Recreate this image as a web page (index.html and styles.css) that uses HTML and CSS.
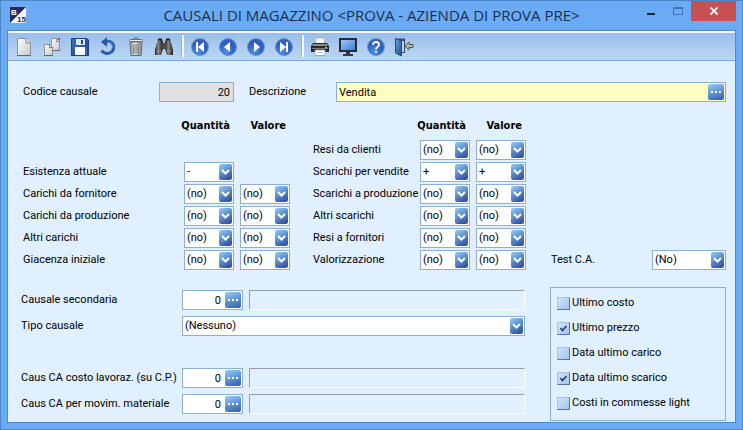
FILE: index.html
```html
<!DOCTYPE html>
<html lang="it">
<head>
<meta charset="utf-8">
<title>Causali di magazzino</title>
<link rel="stylesheet" href="styles.css">
</head>
<body>
<div class="window">
  <header class="titlebar">
    <svg class="app-icon" viewBox="0 0 16 16" aria-hidden="true">
      <rect width="16" height="16" rx="1" fill="#f4f5fa"/>
      <path d="M0 0H16L0 16Z" fill="#2b2a5c"/>
      <text x="1" y="8" class="app-letter">B</text>
      <text x="7" y="15" class="app-number">15</text>
    </svg>
    <h1 class="title">CAUSALI DI MAGAZZINO &lt;PROVA - AZIENDA DI PROVA PRE&gt;</h1>
    <div class="window-buttons">
      <button class="win-btn" type="button" aria-label="Riduci a icona"><svg width="10" height="10" viewBox="0 0 10 10"><rect x="1" y="7" width="8" height="2" fill="#16263c"/></svg></button>
      <button class="win-btn" type="button" aria-label="Ingrandisci"><svg width="10" height="8" viewBox="0 0 10 8"><path d="M.5.5H9.500V7.500H.5ZM.5 1.500H9.500" fill="none" stroke="#4673ad"/></svg></button>
      <button class="win-btn close" type="button" aria-label="Chiudi"><svg width="8" height="8" viewBox="0 0 8 8"><path d="M.5.5L7.500 7.500M7.500.5L.5 7.500" stroke="#fff" stroke-width="1.800"/></svg></button>
    </div>
  </header>

  <main class="client">
    <svg class="defs" aria-hidden="true">
      <defs>
        <linearGradient id="page" x1="0" y1="0" x2="1" y2="1"><stop offset="0" stop-color="#fff"/><stop offset="1" stop-color="#c4c6ca"/></linearGradient>
        <radialGradient id="ball" cx=".4" cy=".75" r=".75"><stop offset="0" stop-color="#4f92ea"/><stop offset=".6" stop-color="#2c5fc0"/><stop offset="1" stop-color="#3b62b4"/></radialGradient>
        <linearGradient id="screen" x1="0" y1="0" x2="1" y2="1"><stop offset="0" stop-color="#9cc8fb"/><stop offset="1" stop-color="#3d80dd"/></linearGradient>
        <linearGradient id="disk" x1="0" y1="0" x2="1" y2="1"><stop offset="0" stop-color="#3c6fb6"/><stop offset="1" stop-color="#1d4288"/></linearGradient>
        <linearGradient id="metal" x1="0" y1="0" x2="1" y2="0"><stop offset="0" stop-color="#8d9095"/><stop offset=".4" stop-color="#eceef0"/><stop offset="1" stop-color="#85888d"/></linearGradient>
        <linearGradient id="lens" x1="0" y1="0" x2="1" y2="0"><stop offset="0" stop-color="#1c1c1e"/><stop offset=".4" stop-color="#8a8782"/><stop offset="1" stop-color="#18181a"/></linearGradient>
        <linearGradient id="door" x1="0" y1="0" x2="1" y2="1"><stop offset="0" stop-color="#6f9fdc"/><stop offset="1" stop-color="#244a92"/></linearGradient>
      </defs>
    </svg>

    <nav class="toolbar" aria-label="Comandi">
      <button type="button" aria-label="Nuovo"><svg viewBox="0 0 20 20"><path d="M3.500 1.500H12L16.500 6V18.500H3.500Z" fill="url(#page)" stroke="#8f9399"/><path d="M12 1.500V6H16.500" fill="#e3e4e7" stroke="#85898f"/><path d="M3 18.500H17" stroke="#63676c"/></svg></button>
      <button type="button" aria-label="Duplica"><svg viewBox="0 0 20 20"><path d="M9.500 1.500H15L17.500 4V13.500H9.500Z" fill="url(#page)" stroke="#8f9399"/><path d="M14.500 1.500V4.500H17.500" fill="none" stroke="#85898f"/><path d="M2.500 7.500H8L10.500 10V18.500H2.500Z" fill="url(#page)" stroke="#8f9399"/><path d="M7.500 7.500V10.500H10.500" fill="none" stroke="#777b80"/><path d="M2 18.500H11M10.500 13.500H18" stroke="#63676c"/><rect x="16" y="1" width="2" height="2" fill="#d8435a"/></svg></button>
      <button type="button" aria-label="Salva"><svg viewBox="0 0 20 20"><path d="M1.500 1.500H17L18.500 3V18.500H1.500Z" fill="url(#disk)" stroke="#1c4389"/><rect x="6" y="2" width="9" height="6" fill="#dce6f2"/><rect x="11" y="3" width="2" height="4" fill="#26487f"/><rect x="5" y="10" width="10" height="8" fill="#fff"/><rect x="15" y="10" width="2" height="8" fill="#2e64b4"/></svg></button>
      <button type="button" aria-label="Annulla"><svg viewBox="0 0 20 20"><path d="M8 4.500C13 3.500 16.500 7 15.500 11.500C14.500 16.500 7.500 18.500 3.500 13.500" fill="none" stroke="#2f5fa9" stroke-width="3"/><path d="M9 0V10L3 5Z" fill="#2a579f"/><path d="M10 5C13 5 15 8 14.500 11" fill="none" stroke="#6392d2"/></svg></button>
      <button type="button" aria-label="Elimina"><svg viewBox="0 0 20 20"><path d="M4 5H16L15 18.500H5Z" fill="url(#metal)" stroke="#65696e"/><path d="M7 7L7.500 17M9 7V17M11 7V17M13 7L12.500 17" stroke="#777b80"/><rect x="3.500" y="2.500" width="13" height="2" rx="1" fill="#e6e8ea" stroke="#6d7176"/><path d="M8 2V1H12V2" fill="none" stroke="#6d7176"/></svg></button>
      <button type="button" aria-label="Cerca"><svg viewBox="0 0 20 20"><path d="M4 2H8L9 5V12L7 18H1V13Z" fill="url(#lens)"/><path d="M12 2H16L19 13V18H13L11 12V5Z" fill="url(#lens)"/><rect x="8" y="6" width="4" height="6" fill="#4b4a49"/><path d="M4 2.500H8M12 2.500H16" stroke="#242426" stroke-width="2"/><path d="M2.500 14H7M13 14H17" stroke="#a5a19a"/></svg></button>
      <span class="separator"></span>
      <button type="button" aria-label="Primo"><svg viewBox="0 0 20 20"><circle cx="10" cy="10" r="8.500" fill="url(#ball)" stroke="#7590cb"/><path d="M6 5H8V15H6ZM14 5V15L8 10Z" fill="#fff"/></svg></button>
      <button type="button" aria-label="Precedente"><svg viewBox="0 0 20 20"><circle cx="10" cy="10" r="8.500" fill="url(#ball)" stroke="#7590cb"/><path d="M12 5V15L6 10Z" fill="#fff"/></svg></button>
      <button type="button" aria-label="Successivo"><svg viewBox="0 0 20 20"><circle cx="10" cy="10" r="8.500" fill="url(#ball)" stroke="#7590cb"/><path d="M8 5V15L14 10Z" fill="#fff"/></svg></button>
      <button type="button" aria-label="Ultimo"><svg viewBox="0 0 20 20"><circle cx="10" cy="10" r="8.500" fill="url(#ball)" stroke="#7590cb"/><path d="M12 5H14V15H12ZM6 5V15L12 10Z" fill="#fff"/></svg></button>
      <span class="separator"></span>
      <button type="button" aria-label="Stampa"><svg viewBox="0 0 20 20"><path d="M6 1H14L15 7H5Z" fill="#f9f9fa" stroke="#b4b6ba"/><path d="M3 6H17L19 9V15H1V9Z" fill="#29292b"/><path d="M3 7H17L18 9H2Z" fill="#8e908c"/><rect x="2" y="11" width="16" height="1" fill="#77797b"/><rect x="15" y="10" width="2" height="1" fill="#a8d35a"/><path d="M5 13H15V18.500H5Z" fill="#fff" stroke="#a5a7aa"/><path d="M7 15.500H13" stroke="#b7b9bc"/></svg></button>
      <button type="button" aria-label="Anteprima"><svg viewBox="0 0 20 20"><rect x="1" y="1" width="18" height="14" fill="#2c2c2f"/><rect x="3" y="3" width="14" height="10" fill="url(#screen)"/><path d="M8 15H12V17H15V19H5V17H8Z" fill="#38383b"/></svg></button>
      <button type="button" aria-label="Aiuto"><svg viewBox="0 0 20 20"><circle cx="10" cy="10" r="8.500" fill="url(#ball)" stroke="#7590cb"/><path d="M7 8C7 4 13.500 4 13 8C12.500 10 10 10 10 12.500M10 14V16" fill="none" stroke="#fff" stroke-width="1.800"/></svg></button>
      <button type="button" aria-label="Esci"><svg viewBox="0 0 20 20"><path d="M2 1.500H11V16H2Z" fill="#3a4a63"/><path d="M7 4H10V15H7Z" fill="#b9d2f0"/><path d="M1.500 1.500L7.500 4V19L1.500 16Z" fill="url(#door)" stroke="#27488a"/><path d="M11 9L15 5V7.500H19V10.500H15V13Z" fill="#b9b7ad" stroke="#55554f"/></svg></button>
    </nav>

    <form class="form">
      <div class="identity">
        <label for="codice">Codice causale</label>
        <input class="field code" id="codice" value="20" readonly>
        <label class="description-label" for="descrizione">Descrizione</label>
        <div class="lookup wide">
          <input id="descrizione" value="Vendita">
          <button type="button" class="dots" aria-label="Elenco descrizioni"><svg viewBox="0 0 16 16"><path d="M3 7H5V9H3ZM7 7H9V9H7ZM11 7H13V9H11Z" fill="#fff"/></svg></button>
        </div>
      </div>

      <div class="movements">
        <div class="matrix">
          <span></span><strong>Quantità</strong><strong>Valore</strong>
          <span class="blank"></span>
          <label for="l1">Esistenza attuale</label><select class="field" id="l1"><option>-</option></select><span></span>
          <label for="l2">Carichi da fornitore</label><select class="field" id="l2"><option>(no)</option></select><select class="field" aria-label="Valore carichi da fornitore"><option>(no)</option></select>
          <label for="l3">Carichi da produzione</label><select class="field" id="l3"><option>(no)</option></select><select class="field" aria-label="Valore carichi da produzione"><option>(no)</option></select>
          <label for="l4">Altri carichi</label><select class="field" id="l4"><option>(no)</option></select><select class="field" aria-label="Valore altri carichi"><option>(no)</option></select>
          <label for="l5">Giacenza iniziale</label><select class="field" id="l5"><option>(no)</option></select><select class="field" aria-label="Valore giacenza iniziale"><option>(no)</option></select>
        </div>
        <div class="matrix">
          <span></span><strong>Quantità</strong><strong>Valore</strong>
          <label for="r1">Resi da clienti</label><select class="field" id="r1"><option>(no)</option></select><select class="field" aria-label="Valore resi da clienti"><option>(no)</option></select>
          <label for="r2">Scarichi per vendite</label><select class="field" id="r2"><option>+</option></select><select class="field" aria-label="Valore scarichi per vendite"><option>+</option></select>
          <label for="r3">Scarichi a produzione</label><select class="field" id="r3"><option>(no)</option></select><select class="field" aria-label="Valore scarichi a produzione"><option>(no)</option></select>
          <label for="r4">Altri scarichi</label><select class="field" id="r4"><option>(no)</option></select><select class="field" aria-label="Valore altri scarichi"><option>(no)</option></select>
          <label for="r5">Resi a fornitori</label><select class="field" id="r5"><option>(no)</option></select><select class="field" aria-label="Valore resi a fornitori"><option>(no)</option></select>
          <label for="r6">Valorizzazione</label><select class="field" id="r6"><option>(no)</option></select><select class="field" aria-label="Valore valorizzazione"><option>(no)</option></select>
        </div>
        <div class="test">
          <label for="test">Test C.A.</label>
          <select class="field" id="test"><option>(No)</option></select>
        </div>
      </div>

      <div class="details">
        <div class="links">
          <div class="link-row">
            <label for="secondaria">Causale secondaria</label>
            <div class="lookup"><input id="secondaria" value="0"><button type="button" class="dots" aria-label="Elenco causali"><svg viewBox="0 0 16 16"><path d="M3 7H5V9H3ZM7 7H9V9H7ZM11 7H13V9H11Z" fill="#fff"/></svg></button></div>
            <output class="readout" for="secondaria"></output>
          </div>
          <div class="link-row">
            <label for="tipo">Tipo causale</label>
            <select class="field type" id="tipo"><option>(Nessuno)</option></select>
          </div>
          <div class="link-row cost">
            <label for="costo">Caus CA costo lavoraz. (su C.P.)</label>
            <div class="lookup"><input id="costo" value="0"><button type="button" class="dots" aria-label="Elenco causali di costo"><svg viewBox="0 0 16 16"><path d="M3 7H5V9H3ZM7 7H9V9H7ZM11 7H13V9H11Z" fill="#fff"/></svg></button></div>
            <output class="readout" for="costo"></output>
          </div>
          <div class="link-row">
            <label for="materiale">Caus CA per movim. materiale</label>
            <div class="lookup"><input id="materiale" value="0"><button type="button" class="dots" aria-label="Elenco causali materiale"><svg viewBox="0 0 16 16"><path d="M3 7H5V9H3ZM7 7H9V9H7ZM11 7H13V9H11Z" fill="#fff"/></svg></button></div>
            <output class="readout" for="materiale"></output>
          </div>
        </div>
        <div class="options">
          <label><input type="checkbox">Ultimo costo</label>
          <label><input type="checkbox" checked>Ultimo prezzo</label>
          <label><input type="checkbox">Data ultimo carico</label>
          <label><input type="checkbox" checked>Data ultimo scarico</label>
          <label><input type="checkbox">Costi in commesse light</label>
        </div>
      </div>
    </form>
  </main>
</div>
</body>
</html>
```
FILE: styles.css
```css
* {
  box-sizing: border-box;
}

body {
  margin: 0;
  color: #000;
  font-family: Roboto, "Liberation Sans", sans-serif;
  font-size: 11px;
  line-height: 14px;
}

button,
input,
select {
  margin: 0;
  padding: 0;
  border: 0;
  color: inherit;
  font: inherit;
}

.window {
  display: flex;
  flex-direction: column;
  min-height: 100vh;
  padding: 0 6px 6px;
  border: 1px solid #4a86c8;
  background: #6babf5;
}

.titlebar {
  display: grid;
  grid-template-columns: 99px 1fr 99px;
  height: 29px;
}

.app-icon {
  width: 16px;
  height: 16px;
  margin: 6px 3px;
}

.app-letter,
.app-number {
  font-family: "Liberation Sans", sans-serif;
  font-size: 8px;
  font-weight: bold;
}

.app-letter {
  fill: #fff;
}

.app-number {
  fill: #2b2a5c;
}

.title {
  margin: 0;
  color: #18304f;
  font-family: "Open Sans", "Noto Sans", sans-serif;
  font-size: 15px;
  font-weight: 400;
  line-height: 29px;
  text-align: center;
  white-space: nowrap;
}

.window-buttons {
  display: flex;
  justify-content: flex-end;
}

.win-btn {
  display: flex;
  flex: none;
  align-items: center;
  justify-content: center;
  width: 27px;
  height: 20px;
  background: none;
}

.win-btn.close {
  width: 45px;
  background: #c75050;
}

.client {
  display: flex;
  flex: 1;
  flex-direction: column;
  border: 1px solid #5088c8;
  background: #e1f0fe;
}

.defs {
  position: absolute;
  width: 0;
  height: 0;
}

.toolbar {
  display: flex;
  height: 30px;
  padding: 0 2px;
  border-top: 2px solid #f2f8fe;
  border-bottom: 1px solid #80a8da;
  background: linear-gradient(#9abfea, #bcd7f4);
}

.toolbar button {
  display: flex;
  align-items: center;
  justify-content: center;
  width: 28px;
  background: none;
}

.toolbar svg {
  width: 20px;
  height: 20px;
}

.separator {
  width: 8px;
  padding: 2px 3px;
}

.separator::before {
  display: block;
  width: 2px;
  height: 22px;
  border-left: 1px solid #8db2e2;
  background: #f5faff;
  content: "";
}

.form {
  padding: 21px 9px 1px 15px;
}

.field,
.lookup {
  height: 20px;
  border: 1px solid #8faed4;
  border-radius: 0;
  background-color: #fff;
}

select.field {
  width: 100%;
  padding: 0 18px 0 2px;
  appearance: none;
  background-image: url("data:image/svg+xml,%3Csvg xmlns='http://www.w3.org/2000/svg' width='13' height='16'%3E%3Cdefs%3E%3ClinearGradient id='g' x1='0' y1='0' x2='.5' y2='1'%3E%3Cstop offset='0' stop-color='%239ccdf4'/%3E%3Cstop offset='.5' stop-color='%235f96d4'/%3E%3Cstop offset='1' stop-color='%233a57a5'/%3E%3C/linearGradient%3E%3C/defs%3E%3Crect width='13' height='16' rx='2' fill='url(%23g)'/%3E%3Cpath d='M3 6L6.5 9.500L10 6' fill='none' stroke='white' stroke-width='2'/%3E%3C/svg%3E");
  background-repeat: no-repeat;
  background-position: right 1px center;
}

.identity {
  display: grid;
  grid-template-columns: 136px 75px 102px 1fr;
  align-items: center;
}

.code {
  width: 100%;
  padding: 0 3px;
  background: #e0e0e0;
  text-align: right;
}

.description-label {
  padding-left: 15px;
}

.lookup {
  display: flex;
  align-items: center;
  padding-right: 1px;
}

.lookup input {
  flex: 1;
  width: 0;
  height: 18px;
  padding: 0 4px 0 2px;
  background: none;
  text-align: right;
}

.lookup.wide {
  background: #ffffbf;
}

.lookup.wide input {
  text-align: left;
}

.dots {
  display: flex;
  flex: none;
  width: 16px;
  height: 16px;
  border-radius: 2px;
  background: linear-gradient(160deg, #9ccdf4, #5f96d4 50%, #3a57a5);
}

.dots svg {
  width: 16px;
  height: 16px;
}

.movements {
  display: grid;
  grid-template-columns: 267px 213px 1fr;
  column-gap: 23px;
  margin-top: 11px;
}

.matrix {
  display: grid;
  grid-template-columns: minmax(0, 1fr) 50px 50px;
  grid-template-rows: 25px;
  grid-auto-rows: 20px;
  gap: 2px 6px;
  align-items: center;
  white-space: nowrap;
}

.matrix strong {
  justify-self: end;
  padding-right: 4px;
  font-family: "DejaVu Sans Condensed", "DejaVu Sans", sans-serif;
}

.blank {
  grid-column: 1 / -1;
}

.test {
  display: flex;
  align-items: center;
  align-self: end;
  justify-content: space-between;
  padding-left: 2px;
}

.test .field {
  width: 74px;
}

.details {
  display: grid;
  grid-template-columns: 1fr 176px;
  column-gap: 25px;
  margin: 17px 0 0 -2px;
}

.links {
  display: flex;
  flex-direction: column;
  gap: 6px;
  padding-top: 3px;
}

.link-row {
  display: grid;
  grid-template-columns: 161px 61px 1fr;
  align-items: center;
  white-space: nowrap;
}

.link-row.cost {
  margin-top: 26px;
}

.type {
  grid-column: 2 / -1;
}

.readout {
  height: 20px;
  margin-left: 6px;
  border: 1px solid;
  border-color: #999ea6 #fff #fff #999ea6;
}

.options {
  display: flex;
  flex-direction: column;
  gap: 11px;
  padding: 8px 6px 10px;
  border: 1px solid #8faed4;
}

.options label {
  display: flex;
  align-items: center;
  gap: 2px;
}

.options input {
  width: 13px;
  height: 13px;
  border: 1px solid;
  border-color: #a9c2e6 #5673ad #5673ad #a9c2e6;
  appearance: none;
  background: linear-gradient(135deg, #cfe5fc, #a3c2ee);
}

.options input:checked {
  background: url("data:image/svg+xml,%3Csvg xmlns='http://www.w3.org/2000/svg' width='11' height='11'%3E%3Cpath d='M2.500 5L4.500 7.500L8.500 3' fill='none' stroke='%231c3474' stroke-width='1.500'/%3E%3C/svg%3E"), linear-gradient(135deg, #cfe5fc, #a3c2ee);
}
```
